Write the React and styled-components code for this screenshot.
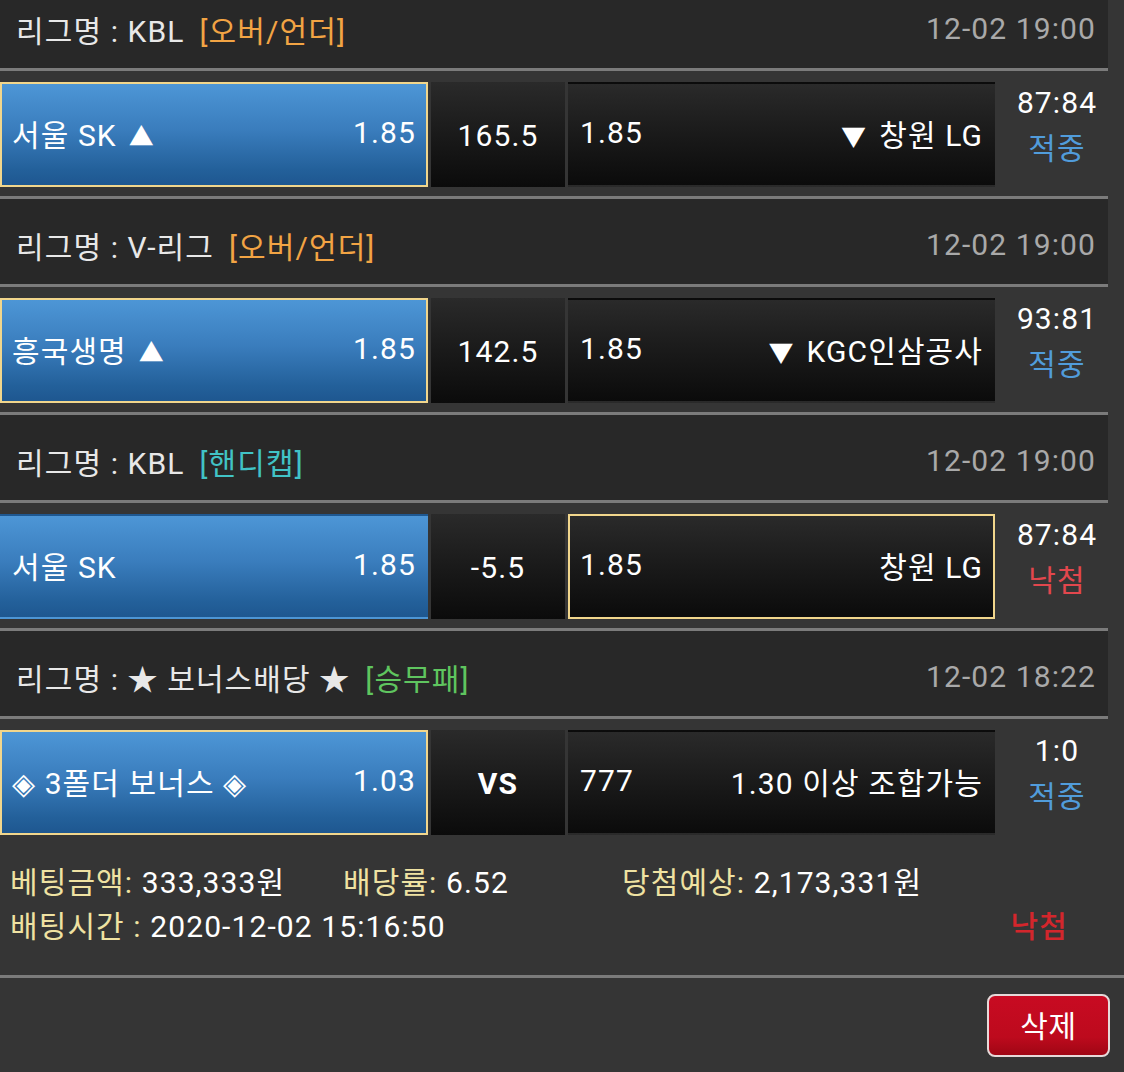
import React from 'react'
import styled, { createGlobalStyle } from 'styled-components'

const bets = [
  {
    league: 'KBL',
    tag: '[오버/언더]',
    tagColor: '#f2a444',
    time: '12-02 19:00',
    home: '서울 SK',
    homeArrow: '▲',
    homeOdds: '1.85',
    mid: '165.5',
    awayOdds: '1.85',
    awayArrow: '▼',
    away: '창원 LG',
    pick: 'home',
    score: '87:84',
    result: 'win'
  },
  {
    league: 'V-리그',
    tag: '[오버/언더]',
    tagColor: '#f2a444',
    time: '12-02 19:00',
    home: '흥국생명',
    homeArrow: '▲',
    homeOdds: '1.85',
    mid: '142.5',
    awayOdds: '1.85',
    awayArrow: '▼',
    away: 'KGC인삼공사',
    pick: 'home',
    score: '93:81',
    result: 'win'
  },
  {
    league: 'KBL',
    tag: '[핸디캡]',
    tagColor: '#41c3c6',
    time: '12-02 19:00',
    home: '서울 SK',
    homeOdds: '1.85',
    mid: '-5.5',
    awayOdds: '1.85',
    away: '창원 LG',
    pick: 'away',
    score: '87:84',
    result: 'lose'
  },
  {
    league: '★ 보너스배당 ★',
    tag: '[승무패]',
    tagColor: '#5fc55f',
    time: '12-02 18:22',
    home: '◈ 3폴더 보너스 ◈',
    homeOdds: '1.03',
    mid: 'VS',
    awayOdds: '777',
    away: '1.30 이상 조합가능',
    pick: 'home',
    score: '1:0',
    result: 'win'
  }
]

const App = () => {
  return (
    <>
      <GlobalStyle />
      <PageDiv>
        {bets.map((bet, i) => (
          <section key={i}>
            <HeaderDiv>
              <LeagueSpan>
                리그명 : {bet.league}
                <TagSpan color={bet.tagColor}>{bet.tag}</TagSpan>
              </LeagueSpan>
              <TimeSpan>{bet.time}</TimeSpan>
            </HeaderDiv>
            <LineDiv />
            <GameRowDiv>
              <TeamBox home selected={bet.pick === 'home'}>
                <span>
                  {bet.home}
                  {bet.homeArrow && <ArrowSpan after>{bet.homeArrow}</ArrowSpan>}
                </span>
                <span>{bet.homeOdds}</span>
              </TeamBox>
              <MidBox bold={bet.mid === 'VS'}>{bet.mid}</MidBox>
              <TeamBox selected={bet.pick === 'away'}>
                <span>{bet.awayOdds}</span>
                <span>
                  {bet.awayArrow && <ArrowSpan>{bet.awayArrow}</ArrowSpan>}
                  {bet.away}
                </span>
              </TeamBox>
              <ScoreDiv>
                <span>{bet.score}</span>
                <ResultSpan result={bet.result}>
                  {bet.result === 'win' ? '적중' : '낙첨'}
                </ResultSpan>
              </ScoreDiv>
            </GameRowDiv>
            {i < bets.length - 1 && <LineDiv />}
          </section>
        ))}
        <InfoDiv>
          <InfoRowDiv>
            <InfoItem width="333px">
              <LabelSpan>베팅금액:</LabelSpan> 333,333원
            </InfoItem>
            <InfoItem width="279px">
              <LabelSpan>배당률:</LabelSpan> 6.52
            </InfoItem>
            <InfoItem>
              <LabelSpan>당첨예상:</LabelSpan> 2,173,331원
            </InfoItem>
          </InfoRowDiv>
          <InfoRowDiv>
            <InfoItem>
              <LabelSpan>배팅시간 :</LabelSpan> 2020-12-02 15:16:50
            </InfoItem>
            <StatusSpan>낙첨</StatusSpan>
          </InfoRowDiv>
        </InfoDiv>
        <LineDiv full />
        <FooterDiv>
          <DeleteButton>삭제</DeleteButton>
        </FooterDiv>
      </PageDiv>
    </>
  )
}

export default App

// STYLING
const GlobalStyle = createGlobalStyle`
  html,
  body {
    margin: 0;
    padding: 0;
    background: #353535;
    overflow: hidden;
  }
  body {
    font-family: Roboto, "Noto Sans CJK KR", sans-serif;
    font-size: 30px;
    letter-spacing: 1.1px;
    color: #fff;
  }
`

const PageDiv = styled.div`
  width: 1124px;
  height: 1089px;
  margin-top: -17px;
  overflow: hidden;
`

const HeaderDiv = styled.div`
  width: 1108px;
  height: 85px;
  box-sizing: border-box;
  padding: 6px 12px 0 16px;
  background: #282828;
  display: flex;
  align-items: center;
  justify-content: space-between;
`

const LeagueSpan = styled.span`
  color: #e8e8e8;
  white-space: pre;
`

const TagSpan = styled.span`
  color: ${({ color }) => color};
  margin-left: 15px;
`

const TimeSpan = styled.span`
  color: #a9a9a9;
`

const LineDiv = styled.div`
  width: ${({ full }) => (full ? '100%' : '1108px')};
  height: 3px;
  background: #7b7b7b;
`

const GameRowDiv = styled.div`
  height: 125px;
  box-sizing: border-box;
  padding: 11px 0 9px;
  display: grid;
  grid-template-columns: 428px 134px 427px 1fr;
  column-gap: 3px;
  width: 1116px;
`

const TeamBox = styled.div`
  box-sizing: border-box;
  display: flex;
  align-items: center;
  justify-content: space-between;
  padding: 0 10px 4px;
  border: 2px solid ${({ selected }) => (selected ? '#f1d68c' : 'transparent')};
  background: ${({ home }) =>
    home
      ? 'linear-gradient(#4d96d6 0%, #3a7dbd 45%, #23609a 85%, #1e5790 100%)'
      : 'linear-gradient(#2a2a2a 0%, #1a1a1a 50%, #0b0b0b 100%)'};
  white-space: pre;
`

const ArrowSpan = styled.span`
  font-size: 25px;
  margin: ${({ after }) => (after ? '0 0 0 12px' : '0 12px 0 0')};
`

const MidBox = styled.div`
  display: flex;
  align-items: center;
  justify-content: center;
  padding-top: 2px;
  font-weight: ${({ bold }) => (bold ? 700 : 400)};
  background: linear-gradient(#2a2a2a 0%, #1a1a1a 50%, #0b0b0b 100%);
`

const ScoreDiv = styled.div`
  display: flex;
  flex-direction: column;
  align-items: center;
  margin-top: -2px;
  line-height: 46px;
`

const ResultSpan = styled.span`
  color: ${({ result }) => (result === 'win' ? '#519cdb' : '#e2474d')};
`

const InfoDiv = styled.div`
  height: 131px;
  box-sizing: border-box;
  padding: 17px 56px 0 10px;
  line-height: 44px;
`

const InfoRowDiv = styled.div`
  display: flex;
  align-items: center;
  justify-content: space-between;
  white-space: pre;
`

const InfoItem = styled.span`
  width: ${({ width }) => width || 'auto'};
  flex: ${({ width }) => (width ? 'none' : '1')};
`

const LabelSpan = styled.span`
  color: #efe2a2;
`

const StatusSpan = styled.span`
  color: #d3262c;
  font-weight: 500;
`

const FooterDiv = styled.div`
  display: flex;
  justify-content: flex-end;
  padding: 16px 14px 0 0;
`

const DeleteButton = styled.button`
  width: 123px;
  height: 63px;
  border: 2px solid #e6d9d9;
  border-radius: 8px;
  background: linear-gradient(#c80b22 0%, #bd0a1d 70%, #9f0614 100%);
  color: #fff;
  font-family: Roboto, "Noto Sans CJK KR", sans-serif;
  font-size: 30px;
  letter-spacing: 0.6px;
  padding: 0 0 4px;
`
